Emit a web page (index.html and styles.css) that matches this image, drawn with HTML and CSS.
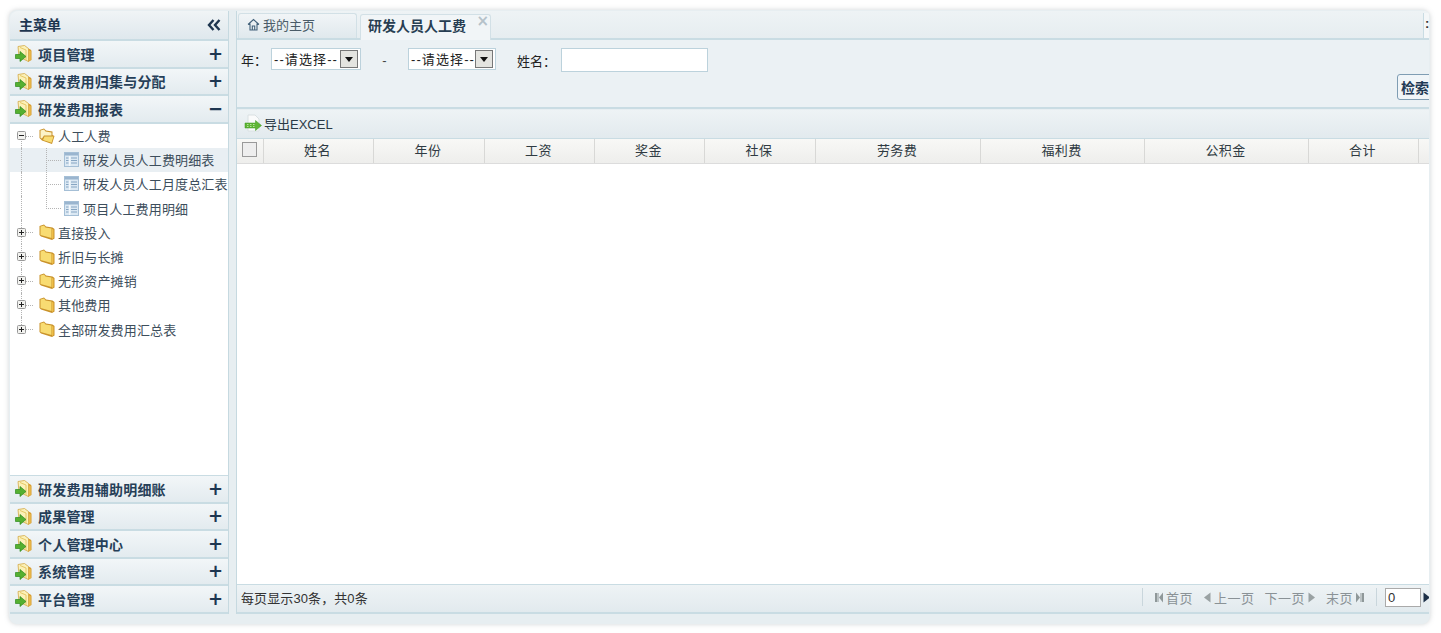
FILE: index.html
```html
<!DOCTYPE html>
<html lang="zh">
<head>
<meta charset="utf-8">
<title>研发人员人工费</title>
<link rel="stylesheet" href="styles.css">
</head>
<body>
<svg class="defs" width="0" height="0" aria-hidden="true">
  <symbol id="menu-folder" viewBox="0 0 17 17">
    <path d="M11 2.500 15.500 4.500q1 .5 1 1.500v9l-3.500 2z" fill="#d79b2c"/>
    <path d="M14.300 5.500 15.500 6v9l-1.200.7z" fill="#f3c95c"/>
    <path d="M3 1.500 9.500 .5 13.500 3.500V16.500L4 12z" fill="#fbf1b8" stroke="#d3a846" stroke-width=".8"/>
    <path d="M5 2.500 11 5v10" fill="none" stroke="#e7c866" stroke-width="1"/>
    <path d="M.5 9.500h4.500V6.500l6 5-6 5v-3H.5z" fill="#55b030" stroke="#2c8a1c" stroke-width=".7"/>
  </symbol>
  <symbol id="tree-folder" viewBox="0 0 16 16">
    <path d="M.5 2 5 .5 7 2.500 13.500 3.500 15.500 5V14.500L13 16 2 12.500.5 11z" fill="#c9922a"/>
    <path d="M1.500 2.500 5 1.500 6.500 3.500 12.500 4.500V14L1.500 11z" fill="#f8dc72"/>
    <path d="M13 5 14.500 5.500V14L13 15z" fill="#eebe48"/>
  </symbol>
  <symbol id="tree-open" viewBox="0 0 16 16">
    <path d="M.5 2 5 .5 7 2.500 13.500 3.500V7L15.500 8 13 16 3 12.500.5 10z" fill="#c9922a"/>
    <path d="M1.500 2.500 5 1.500 6.500 3.500 12.500 4.500V7.500H5L3 10.500 1.500 10z" fill="#fcf3c6"/>
    <path d="M5.500 8.500H14.500L12.500 14.800 4 12z" fill="#f8dc72"/>
  </symbol>
  <symbol id="doc" viewBox="0 0 15 15">
    <rect x=".5" y=".5" width="14" height="14" fill="#dbe8f3" stroke="#a5bfd6"/>
    <rect x="1" y="1" width="13" height="2.500" fill="#9ab5cf"/>
    <path d="M2 6h2.500M2 8.500h2.500M2 11h2.500M7 6h6M7 8.500h6M7 11h6" stroke="#86a5c2"/>
    <path d="M5.800 4v10" stroke="#fff"/>
  </symbol>
  <symbol id="plus-box" viewBox="0 0 9 9">
    <rect x=".5" y=".5" width="8" height="8" rx="1" fill="#f2f2ef" stroke="#999"/>
    <path d="M2 4.500h5M4.500 2v5" stroke="#222"/>
  </symbol>
  <symbol id="minus-box" viewBox="0 0 9 9">
    <rect x=".5" y=".5" width="8" height="8" rx="1" fill="#f2f2ef" stroke="#999"/>
    <path d="M2 4.500h5" stroke="#222"/>
  </symbol>
  <symbol id="home" viewBox="0 0 13 13">
    <path d="M1 6.500 6.500 1.500 12 6.500M3 5.500V12h7V5.500M5.300 12V8h2.400v4" fill="none" stroke="#42617a" stroke-width="1.100"/>
  </symbol>
  <symbol id="excel" viewBox="0 0 20 20">
    <path d="M4 1h7l4 4v12H4z" fill="#fafbfb" stroke="#d9e0e2"/>
    <path d="M1 9h10.500V6.500l6 5-6 5V14H1z" fill="#5fb535" stroke="#3f9523" stroke-width=".5"/>
    <path d="M3 10.500h1.500M6 10.500h1.500M9 10.500h1.500M3 12.500h1.500M6 12.500h1.500M9 12.500h1.500" stroke="#b4e39b"/>
  </symbol>
  <symbol id="p-first" viewBox="0 0 8 11"><path d="M0 1h2v9H0zM2.500 1h1v9h-1zM8 .5v10L4 5.500z" fill="#8f9899"/></symbol>
  <symbol id="p-prev" viewBox="0 0 8 11"><path d="M7.500 .5v10L1 5.500z" fill="#9aa2a3"/></symbol>
  <symbol id="p-next" viewBox="0 0 8 11"><path d="M.5 .5v10L7 5.500z" fill="#9aa2a3"/></symbol>
  <symbol id="p-last" viewBox="0 0 8 11"><path d="M0 .5v10l4-5zM4.500 1h1v9h-1zM6 1h2v9H6z" fill="#8f9899"/></symbol>
  <symbol id="p-go" viewBox="0 0 8 11"><path d="M.5 .5v10L7 5.500z" fill="#1c3048"/></symbol>
  <symbol id="dbl" viewBox="0 0 14 12"><path d="M6.500 1 2 6l4.500 5M12.500 1 8 6l4.500 5" fill="none" stroke="#1e3650" stroke-width="2.400"/></symbol>
</svg>

<div class="window">
  <aside class="side">
    <div class="side-head"><span>主菜单</span><svg class="collapse"><use href="#dbl"/></svg></div>
    <div class="acc"><svg class="acc-ic"><use href="#menu-folder"/></svg><span class="acc-t">项目管理</span><span class="acc-sign">+</span></div>
    <div class="acc"><svg class="acc-ic"><use href="#menu-folder"/></svg><span class="acc-t">研发费用归集与分配</span><span class="acc-sign">+</span></div>
    <div class="acc"><svg class="acc-ic"><use href="#menu-folder"/></svg><span class="acc-t">研发费用报表</span><span class="acc-sign">−</span></div>
    <div class="tree">
      <div class="row r1 first"><svg class="tg"><use href="#minus-box"/></svg><svg class="fd"><use href="#tree-open"/></svg><span>人工人费</span></div>
      <div class="row r2 sel"><svg class="dc"><use href="#doc"/></svg><span>研发人员人工费明细表</span></div>
      <div class="row r2"><svg class="dc"><use href="#doc"/></svg><span>研发人员人工月度总汇表</span></div>
      <div class="row r2 end"><svg class="dc"><use href="#doc"/></svg><span>项目人工费用明细</span></div>
      <div class="row r1"><svg class="tg"><use href="#plus-box"/></svg><svg class="fd"><use href="#tree-folder"/></svg><span>直接投入</span></div>
      <div class="row r1"><svg class="tg"><use href="#plus-box"/></svg><svg class="fd"><use href="#tree-folder"/></svg><span>折旧与长摊</span></div>
      <div class="row r1"><svg class="tg"><use href="#plus-box"/></svg><svg class="fd"><use href="#tree-folder"/></svg><span>无形资产摊销</span></div>
      <div class="row r1"><svg class="tg"><use href="#plus-box"/></svg><svg class="fd"><use href="#tree-folder"/></svg><span>其他费用</span></div>
      <div class="row r1 last"><svg class="tg"><use href="#plus-box"/></svg><svg class="fd"><use href="#tree-folder"/></svg><span>全部研发费用汇总表</span></div>
    </div>
    <div class="acc"><svg class="acc-ic"><use href="#menu-folder"/></svg><span class="acc-t">研发费用辅助明细账</span><span class="acc-sign">+</span></div>
    <div class="acc"><svg class="acc-ic"><use href="#menu-folder"/></svg><span class="acc-t">成果管理</span><span class="acc-sign">+</span></div>
    <div class="acc"><svg class="acc-ic"><use href="#menu-folder"/></svg><span class="acc-t">个人管理中心</span><span class="acc-sign">+</span></div>
    <div class="acc"><svg class="acc-ic"><use href="#menu-folder"/></svg><span class="acc-t">系统管理</span><span class="acc-sign">+</span></div>
    <div class="acc"><svg class="acc-ic"><use href="#menu-folder"/></svg><span class="acc-t">平台管理</span><span class="acc-sign">+</span></div>
  </aside>

  <main class="main">
    <div class="tabs">
      <div class="tab"><svg class="home"><use href="#home"/></svg><span>我的主页</span></div>
      <div class="tab active"><span>研发人员人工费</span><span class="close">×</span></div>
      <div class="tab-scroll">:</div>
    </div>

    <form class="search">
      <div class="search-row">
        <label class="lbl-year">年&#65306;</label>
        <div class="sel-box w90"><span class="sel-text">--请选择--</span><span class="sel-btn"><i></i></span></div>
        <span class="dash">-</span>
        <div class="sel-box w88"><span class="sel-text">--请选择--</span><span class="sel-btn"><i></i></span></div>
        <label class="lbl-name">姓名&#65306;</label>
        <input class="name-input" type="text">
      </div>
      <div class="btn-row"><button class="btn" type="button">检索</button></div>
    </form>

    <div class="tools"><svg class="excel"><use href="#excel"/></svg><span>导出EXCEL</span></div>

    <div class="thead">
      <div class="th chk"><span class="check"></span></div>
      <div class="th c110">姓名</div>
      <div class="th c111">年份</div>
      <div class="th c110">工资</div>
      <div class="th c110">奖金</div>
      <div class="th c111">社保</div>
      <div class="th c165">劳务费</div>
      <div class="th c164">福利费</div>
      <div class="th c164">公积金</div>
      <div class="th c110">合计</div>
    </div>

    <div class="tbody"></div>

    <div class="pager">
      <span class="count">每页显示30条&#65292;共0条</span>
      <div class="pager-nav">
        <span class="sep"></span>
        <span class="pg"><svg class="pi"><use href="#p-first"/></svg>首页</span>
        <span class="pg"><svg class="pi"><use href="#p-prev"/></svg>上一页</span>
        <span class="pg"><span>下一页</span><svg class="pi"><use href="#p-next"/></svg></span>
        <span class="pg"><span>末页</span><svg class="pi"><use href="#p-last"/></svg></span>
        <span class="sep sep2"></span>
        <input class="page-input" type="text" value="0">
        <svg class="go"><use href="#p-go"/></svg>
      </div>
    </div>
  </main>
</div>
</body>
</html>
```

FILE: styles.css
```css
* { box-sizing: border-box; }
html, body { margin: 0; height: 100%; overflow: hidden; }
body {
  background: #fff;
  font-family: "Liberation Sans", "Noto Sans CJK SC", sans-serif;
  color: #2f3f4c;
  font-size: 13px;
}
.defs { position: absolute; }

.window {
  width: 1421px;
  height: 614px;
  margin: 10px 0 0 9px;
  padding: 1px 1px 10.5px 1px;
  display: flex;
  gap: 7px;
  background: #e7eef1;
  border-radius: 8px;
  box-shadow: 0 0 5px rgba(120, 130, 135, .35);
  overflow: hidden;
}

/* sidebar */
.side {
  width: 219px;
  flex: none;
  display: flex;
  flex-direction: column;
  border-right: 1px solid #c6d9e0;
}
.side-head {
  height: 30px;
  flex: none;
  display: flex;
  align-items: center;
  justify-content: space-between;
  padding: 0 7px 3px 9px;
  font-size: 14px;
  font-weight: 700;
  color: #1e3650;
  background: linear-gradient(#f0f4f6, #dfe8ed);
  border-bottom: 2px solid #c9dce3;
  border-top-left-radius: 8px;
}
.collapse { width: 14px; height: 12px; flex: none; margin-top: 3px; }
.acc {
  height: 27.5px;
  flex: none;
  display: flex;
  align-items: center;
  padding: 0 5px 0 5px;
  background: linear-gradient(#f2f6f8, #e3ebef);
  border-bottom: 2px solid #c9dce3;
}
.acc-ic { width: 17px; height: 17px; flex: none; }
.acc-t { margin-left: 6px; font-size: 14px; font-weight: 700; letter-spacing: .2px; color: #263f58; }
.acc-sign {
  margin-left: auto;
  font-family: "DejaVu Sans", sans-serif;
  font-size: 18px;
  font-weight: 700;
  line-height: 18px;
  color: #1e3650;
}

/* tree */
.tree {
  flex: 1;
  min-height: 0;
  background: #fff;
  border-bottom: 1px solid #c9dce3;
}
.row {
  position: relative;
  height: 24.2px;
  display: flex;
  align-items: center;
  font-size: 13px;
  letter-spacing: .15px;
  color: #3d4e5c;
  white-space: nowrap;
  overflow: hidden;
}
.r1 { padding-left: 7px; }
.r2 { padding-left: 54px; }
.tg { width: 9px; height: 9px; flex: none; position: relative; z-index: 1; }
.fd { width: 16px; height: 16px; flex: none; margin-left: 13px; }
.r1 span { margin-left: 3px; }
.dc { width: 15px; height: 15px; flex: none; }
.r2 span { margin-left: 4px; }
.sel { background: #e9eff3; }
.r1::before {
  content: "";
  position: absolute;
  left: 11px;
  top: 0;
  bottom: 0;
  border-left: 1px dotted #b4b4b4;
}
.r1.first::before { top: 12px; }
.r1.last::before { bottom: 12px; }
.r1::after {
  content: "";
  position: absolute;
  left: 16px;
  width: 7px;
  top: 12px;
  border-top: 1px dotted #b4b4b4;
}
.r2::before {
  content: "";
  position: absolute;
  left: 11px;
  top: 0;
  bottom: 0;
  border-left: 1px dotted #b4b4b4;
}
.r2::after {
  content: "";
  position: absolute;
  left: 36px;
  width: 14px;
  top: 0;
  height: 12px;
  border-left: 1px dotted #b4b4b4;
  border-bottom: 1px dotted #b4b4b4;
}
.r2:not(.end) {
  background-image: linear-gradient(#b4b4b4 50%, transparent 50%);
  background-size: 1px 2px;
  background-position: 36px 0;
  background-repeat: repeat-y;
}

/* main */
.main {
  flex: 1;
  min-width: 0;
  display: flex;
  flex-direction: column;
  overflow: hidden;
  border-left: 1px solid #c6d9e0;
}
.tabs {
  height: 29px;
  flex: none;
  display: flex;
  align-items: flex-end;
  padding-left: 1px;
  gap: 3px;
  background: linear-gradient(#eef3f5, #e6edf0);
  border-bottom: 2px solid #c9dce3;
}
.tab {
  height: 25px;
  width: 119px;
  display: flex;
  align-items: center;
  padding: 0 0 3px 8px;
  font-size: 13px;
  color: #4a5c68;
  background: linear-gradient(#f1f5f7, #e0e9ed);
  border: 1px solid #d2e0e6;
  border-bottom: 0;
  border-radius: 3px 3px 0 0;
}
.home { width: 13px; height: 13px; margin-right: 3px; flex: none; }
.tab.active {
  position: relative;
  width: 131px;
  height: 26px;
  margin-bottom: -2px;
  padding: 0 0 5px 7px;
  font-weight: 700;
  font-size: 14px;
  color: #283e52;
  background: #f1f5f7;
}
.close {
  position: absolute;
  right: 1px;
  top: -1px;
  font-size: 15px;
  font-weight: 700;
  line-height: 15px;
  color: #b5c2ca;
  font-family: "DejaVu Sans", sans-serif;
}
.tab-scroll {
  margin-left: auto;
  width: 6px;
  height: 25px;
  border-left: 1px solid #c9dce3;
  background: #f4f7f8;
  font-weight: 700;
  font-size: 13px;
  line-height: 22px;
  color: #333;
  padding-left: 1px;
}

.search {
  height: 69px;
  flex: none;
  padding-top: 8px;
  background: #ebf1f4;
  border-bottom: 2px solid #c9dce3;
}
.search-row { display: flex; align-items: center; height: 24px; padding-left: 4px; }
.lbl-year { width: 30px; font-size: 13px; color: #222; padding-bottom: 2px; white-space: nowrap; }
.sel-box {
  height: 22px;
  margin-bottom: 2px;
  display: flex;
  align-items: center;
  justify-content: space-between;
  padding: 0 2px 0 2px;
  background: #fff;
  border: 1px solid #bcd2dc;
  font-size: 13px;
  color: #222;
  white-space: nowrap;
}
.sel-text { letter-spacing: 1.1px; margin-top: -1px; }
.w90 { width: 90px; }
.w88 { width: 88px; }
.sel-btn {
  width: 18px;
  height: 18px;
  flex: none;
  display: flex;
  align-items: center;
  justify-content: center;
  background: #e4e4e0;
  border: 1px solid #777;
}
.sel-btn i {
  width: 0;
  height: 0;
  border: 4px solid transparent;
  border-top: 5px solid #111;
  border-bottom: 0;
}
.dash { width: 47px; text-align: center; color: #444; }
.lbl-name { width: 44px; margin-left: 21px; color: #222; white-space: nowrap; }
.name-input {
  width: 147px;
  height: 24px;
  padding: 0 3px;
  background: #fff;
  border: 1px solid #bcd2dc;
}
.btn-row { padding: 1px 0 0 1160px; white-space: nowrap; display: flex; margin-top: 1px; }
.btn {
  flex: none;
  width: 40px;
  height: 26px;
  padding: 0 0 0 3px;
  text-align: left;
  font: 700 14px "Liberation Sans", "Noto Sans CJK SC", sans-serif;
  color: #1f3a55;
  background: #f0f5f8;
  border: 1px solid #7f9db3;
  border-radius: 3px;
}

.tools {
  height: 29px;
  flex: none;
  margin-top: 1px;
  display: flex;
  align-items: center;
  padding: 0 0 1px 7px;
  font-size: 13px;
  color: #2a3a46;
  background: linear-gradient(#eef3f5, #e2eaee);
  border-bottom: 1px solid #c9dce3;
}
.excel { width: 20px; height: 20px; flex: none; }

.thead {
  height: 25px;
  flex: none;
  display: flex;
  background: linear-gradient(#f8f8f6, #eeeeec);
  border-bottom: 1px solid #dcdcdc;
}
.th {
  flex: none;
  display: flex;
  align-items: center;
  justify-content: center;
  padding: 0 2px 3px 0;
  font-size: 13px;
  letter-spacing: .4px;
  color: #2f3a42;
  border-right: 1px solid #d8d8d6;
}
.th.chk { width: 27px; padding: 0 1px 3px 0; }
.check {
  width: 15px;
  height: 15px;
  background: #eee;
  border: 1px solid #9a9a9a;
}
.c110 { width: 110px; }
.c111 { width: 111px; }
.c165 { width: 165px; }
.c164 { width: 164px; }

.tbody { flex: 1; min-height: 0; background: #fff; }

.pager {
  height: 30px;
  flex: none;
  display: flex;
  align-items: center;
  justify-content: space-between;
  padding-left: 4px;
  background: linear-gradient(#eef3f5, #e2eaee);
  border-top: 1px solid #c9dce3;
  border-bottom: 2px solid #c9dce3;
  white-space: nowrap;
}
.count { font-size: 13px; letter-spacing: .1px; color: #333; margin-top: -2px; }
.pager-nav { display: flex; align-items: center; padding-bottom: 2px; font-size: 13px; letter-spacing: .5px; color: #8a9296; margin-right: -2px; }
.sep { width: 1px; height: 18px; background: #c9d6dc; margin-right: 12px; }
.sep2 { margin: 0 8px 0 2px; }
.pg { display: inline-flex; align-items: center; gap: 3px; margin-right: 10px; }
.pi { width: 8px; height: 11px; flex: none; }
.page-input {
  width: 36px;
  height: 19px;
  padding: 0 2px;
  font-size: 13px;
  font-family: "Liberation Sans", sans-serif;
  color: #333;
  border: 1px solid #aaa;
  background: #fff;
}
.go { width: 8px; height: 11px; margin-left: 2px; flex: none; }
```
